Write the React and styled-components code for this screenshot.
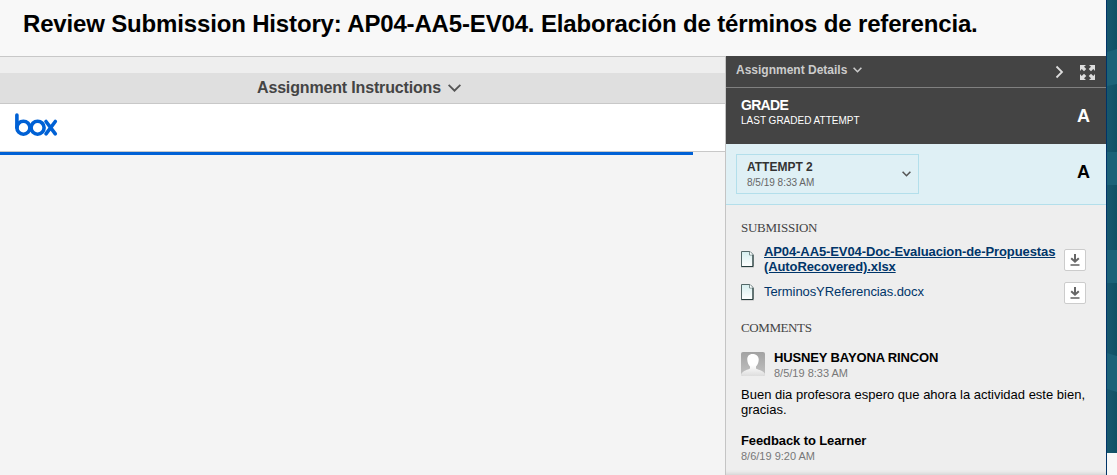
import React from "react";
import styled, { createGlobalStyle } from "styled-components";

const GlobalStyle = createGlobalStyle`
  * { box-sizing: border-box; }
  body {
    margin: 0;
    overflow: hidden;
    background: #f8f8f8;
    font-family: "Liberation Sans", Arial, sans-serif;
    color: #000;
  }
`;

const Page = styled.div`
  display: flex;
  width: 1117px;
  height: 475px;
`;
const Main = styled.main`
  width: 1106px;
  display: flex;
  flex-direction: column;
`;
const Title = styled.h1`
  height: 56px;
  margin: 0;
  padding: 10px 0 0 23px;
  font-size: 24px;
  line-height: 28px;
  letter-spacing: -0.16px;
  white-space: nowrap;
`;
const Columns = styled.div`
  display: flex;
  flex: 1;
`;
const Viewer = styled.section`
  display: flex;
  flex-direction: column;
  width: 726px;
  border-right: 1px solid #c4c4c4;
  background: #f4f4f4;
`;
const Spacer = styled.div`
  height: 17px;
  background: #eee;
  border-top: 1px solid #c8c8c8;
`;
const Instructions = styled.div`
  display: flex;
  height: 31px;
  padding-left: 257px;
  background: #dfdfdf;
  border-bottom: 1px solid #c8c8c8;
  color: #444;
  font-size: 16px;
  font-weight: bold;
  letter-spacing: -0.16px;
  line-height: 29px;
  white-space: nowrap;
  svg { margin: 11px 0 0 7px; }
`;
const BoxBar = styled.div`
  height: 48px;
  padding: 8px 0 0 14px;
  background: #fff;
  border-bottom: 1px solid #c8c8c8;
`;
const Progress = styled.div`
  width: 693px;
  height: 3px;
  background: #0061d5;
`;
const Sidebar = styled.aside`
  display: flex;
  flex-direction: column;
  width: 380px;
  background: #eee;
`;
const DetailsBar = styled.div`
  display: flex;
  height: 32px;
  padding-left: 10px;
  background: #444;
  border-bottom: 1px solid #808080;
  color: #ccc;
`;
const DetailsLabel = styled.div`
  display: flex;
  width: 319px;
  svg { margin: 11px 0 0 6px; }
`;
const BarIcon = styled.span`
  display: block;
  width: ${(p) => p.$width}px;
  padding-top: ${(p) => p.$top}px;
  svg { display: block; }
`;
const Grade = styled.div`
  display: flex;
  justify-content: space-between;
  height: 56px;
  padding: 9px 16px 0 15px;
  background: #444;
  color: #fff;
`;
const Letter = styled.div`
  padding-top: ${(p) => p.$top}px;
  font-size: 18px;
  font-weight: bold;
  line-height: 20px;
`;
const Attempt = styled.div`
  display: flex;
  justify-content: space-between;
  height: 61px;
  padding: 10px 16px 0 10px;
  background: #dff0f5;
  border-bottom: 1px solid #b3dfeb;
`;
const AttemptSelect = styled.div`
  display: flex;
  justify-content: space-between;
  width: 183px;
  height: 40px;
  padding: 5px 7px 0 10px;
  border: 1px solid #b3dfeb;
  > svg { margin-top: 11px; }
`;
const Text = styled.div`
  color: ${(p) => p.$color || "inherit"};
  font-size: ${(p) => p.$size || 12}px;
  font-weight: ${(p) => (p.$bold ? "bold" : "normal")};
  letter-spacing: ${(p) => p.$spacing || 0}px;
  line-height: ${(p) => p.$line || 15}px;
  white-space: nowrap;
`;
const Details = styled.div`
  flex: 1;
  padding: 15px 20px 0 15px;
  box-shadow: inset 0 -5px 4px -4px #ccc;
`;
const SectionHeading = styled.h2`
  height: 16px;
  margin: 0;
  color: #444;
  font-family: "Liberation Serif", serif;
  font-size: 13px;
  font-weight: normal;
  letter-spacing: ${(p) => p.$spacing}px;
  line-height: 16px;
`;
const FileRow = styled.div`
  display: flex;
  height: ${(p) => p.$height}px;
  margin-top: ${(p) => p.$gap}px;
`;
const FileIcon = styled.span`
  width: 23px;
  padding-top: ${(p) => p.$top}px;
  svg { display: block; }
`;
const FileName = styled.a`
  width: 300px;
  color: #003569;
  text-decoration: ${(p) => (p.$active ? "underline" : "none")};
`;
const Download = styled.button`
  display: flex;
  align-items: center;
  justify-content: center;
  width: 22px;
  height: 22px;
  margin: ${(p) => p.$top}px 0 0;
  padding: 0;
  background: #fff;
  border: 1px solid #ccc;
  border-radius: 2px;
`;
const Author = styled.div`
  display: flex;
  gap: 9px;
  margin-top: 14px;
  height: 33px;
  svg { margin-top: 2px; }
`;
const Comment = styled.div`
  height: 46px;
  margin-top: 4px;
`;
const Backdrop = styled.div`
  width: 11px;
  height: 475px;
  border-left: 1px solid #003468;
  background: #f8f8f8;
  svg { display: block; }
`;

const Chevron = ({ width = 9, height = 6, color, stroke = 1.6 }) => (
  <svg width={width} height={height} viewBox={`0 0 ${width} ${height}`} fill="none" stroke={color} strokeWidth={stroke}>
    <path d={`M.6 .8L${width / 2} ${height - 1.3}L${width - 0.6} .8`} />
  </svg>
);

const BoxLogo = () => (
  <svg width="44" height="25" viewBox="0 0 44 25" fill="none" stroke="#0061d5" strokeWidth="3.6" strokeLinecap="round">
    <path d="M2.900 3v12.500" />
    <circle cx="9.400" cy="15.700" r="6.500" />
    <circle cx="23.600" cy="15.700" r="6.500" />
    <path d="M32 9.500l9.300 12.400M41.300 9.500L32 21.900" />
  </svg>
);

const ExpandIcon = () => (
  <svg width="15" height="15" viewBox="0 0 15 15" fill="#ddd">
    <path d="M0 0h6L4 1.700 6.300 4 4 6.300 1.700 4 0 6zM15 0v6l-1.700-2L11 6.300 8.700 4 11 1.700 9 0zM0 15V9l1.700 2L4 8.700 6.300 11 4 13.300 6 15zM15 15H9l2-1.700L8.700 11 11 8.700l2.300 2.300L15 9z" />
  </svg>
);

const DocumentIcon = () => (
  <svg width="14" height="17" viewBox="0 0 14 17">
    <defs>
      <linearGradient id="paper" x2="0" y2="1">
        <stop stopColor="#d5eeee" />
        <stop offset="1" stopColor="#fff" />
      </linearGradient>
    </defs>
    <path d="M0 16h13" stroke="#bbb" />
    <path d="M.5 .5H9L12 3.500V15.500H.5z" fill="url(#paper)" stroke="#536767" />
    <path d="M8.500 .5v3.500H12" fill="none" stroke="#7a8c8c" />
    <path d="M.5 15.500H12V4" fill="none" stroke="#263d3d" />
    <path d="M9 1v2.500h2.500z" fill="#fff" />
  </svg>
);

const DownloadIcon = () => (
  <svg width="10" height="12" viewBox="0 0 10 12" fill="none" stroke="#666" strokeWidth="2">
    <path d="M5 0v7M1.200 4.200L5 7.700l3.800-3.500" />
    <path d="M.5 11h9" stroke="#888" />
  </svg>
);

const Avatar = () => (
  <svg width="24" height="24" viewBox="0 0 24 24">
    <defs>
      <linearGradient id="avatarBg" x2="0" y2="1">
        <stop stopColor="#a2a2a2" />
        <stop offset="1" stopColor="#c2c2c2" />
      </linearGradient>
      <linearGradient id="person" x2="0" y2="1">
        <stop offset=".5" stopColor="#fff" />
        <stop offset="1" stopColor="#ddd" />
      </linearGradient>
    </defs>
    <rect width="24" height="24" rx="2" fill="url(#avatarBg)" />
    <path d="M11.500 2C7.500 2 6 5 6.300 8c.2 3 1.200 5 2.700 6.500v2C7 18 2 18 0 22.500V22q0 2 2 2h20q2 0 2-2c-2-4-7-4-9-5.500v-2c1.500-1.500 2.500-3.500 2.700-6.500C18 5 16 2 11.500 2z" fill="url(#person)" />
  </svg>
);

const Pattern = () => (
  <svg width="10" height="453" viewBox="0 0 10 453">
    <defs>
      <linearGradient id="teal" x2="1" y2="0">
        <stop stopColor="#18586e" />
        <stop offset="1" stopColor="#105064" />
      </linearGradient>
    </defs>
    <rect width="10" height="453" fill="url(#teal)" />
    <path d="M0 52L10 49V84L0 86zM0 152H10V185H0zM0 250H10V283H0zM0 353L10 356V392L0 389z" fill="#1c6278" />
  </svg>
);

export default function App() {
  return (
    <>
      <GlobalStyle />
      <Page>
        <Main>
          <Title>Review Submission History: AP04-AA5-EV04. Elaboración de términos de referencia.</Title>
          <Columns>
            <Viewer>
              <Spacer />
              <Instructions>
                Assignment Instructions
                <Chevron width={13} height={8} color="#555" stroke={1.9} />
              </Instructions>
              <BoxBar><BoxLogo /></BoxBar>
              <Progress />
            </Viewer>
            <Sidebar>
              <DetailsBar>
                <DetailsLabel>
                  <Text $bold $line={28}>Assignment Details</Text>
                  <Chevron color="#ccc" />
                </DetailsLabel>
                <BarIcon $width={25} $top={8}>
                  <svg width="9" height="16" viewBox="0 0 9 16" fill="none" stroke="#ddd" strokeWidth="1.8">
                    <path d="M1.500 2.500L7 8l-5.500 5.500" />
                  </svg>
                </BarIcon>
                <BarIcon $width={15} $top={9}><ExpandIcon /></BarIcon>
              </DetailsBar>
              <Grade>
                <div>
                  <Text $bold $size={14} $line={16} $spacing={-0.7}>GRADE</Text>
                  <Text $size={10}>LAST GRADED ATTEMPT</Text>
                </div>
                <Letter $top={9}>A</Letter>
              </Grade>
              <Attempt>
                <AttemptSelect>
                  <div>
                    <Text $bold $color="#333">ATTEMPT 2</Text>
                    <Text $size={10} $color="#666">8/5/19 8:33 AM</Text>
                  </div>
                  <Chevron color="#555" />
                </AttemptSelect>
                <Letter $top={8}>A</Letter>
              </Attempt>
              <Details>
                <SectionHeading $spacing={-0.25}>SUBMISSION</SectionHeading>
                <FileRow $height={32} $gap={8}>
                  <FileIcon $top={7}><DocumentIcon /></FileIcon>
                  <FileName $active>
                    <Text $bold $size={13} $spacing={-0.1}>AP04-AA5-EV04-Doc-Evaluacion-de-Propuestas</Text>
                    <Text $bold $size={13} $spacing={-0.1}>(AutoRecovered).xlsx</Text>
                  </FileName>
                  <Download $top={5}><DownloadIcon /></Download>
                </FileRow>
                <FileRow $height={38} $gap={6}>
                  <FileIcon $top={2}><DocumentIcon /></FileIcon>
                  <FileName><Text $size={13} $line={19} $spacing={-0.08}>TerminosYReferencias.docx</Text></FileName>
                  <Download $top={0}><DownloadIcon /></Download>
                </FileRow>
                <SectionHeading $spacing={-0.4}>COMMENTS</SectionHeading>
                <Author>
                  <Avatar />
                  <div>
                    <Text $bold $size={13} $line={16} $spacing={-0.14}>HUSNEY BAYONA RINCON</Text>
                    <Text $size={11} $color="#777">8/5/19 8:33 AM</Text>
                  </div>
                </Author>
                <Comment>
                  <Text $size={13}>Buen dia profesora espero que ahora la actividad este bien,</Text>
                  <Text $size={13}>gracias.</Text>
                </Comment>
                <Text $bold $size={13} $line={16} $spacing={-0.1}>Feedback to Learner</Text>
                <Text $size={11} $color="#777">8/6/19 9:20 AM</Text>
              </Details>
            </Sidebar>
          </Columns>
        </Main>
        <Backdrop><Pattern /></Backdrop>
      </Page>
    </>
  );
}
